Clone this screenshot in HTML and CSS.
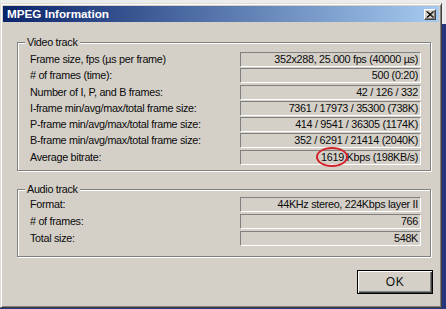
FILE: index.html
```html
<!DOCTYPE html>
<html>
<head>
<meta charset="utf-8">
<title>MPEG Information</title>
<link rel="stylesheet" href="styles.css">
</head>
<body>
<div class="window">
  <div class="titlebar">
    <span class="title">MPEG Information</span>
    <span class="close"><svg width="8" height="7" viewBox="0 0 8 7"><path d="M0.5 0.5 L7 6.5 M1.5 0.5 L8 6.5 M7 0.5 L0.5 6.5 M8 0.5 L1.5 6.5" stroke="#000" stroke-width="1" fill="none"/></svg></span>
  </div>
  <div class="body">
    <section class="group video">
      <div class="legend">Video track</div>
      <div class="rows">
        <div class="label">Frame size, fps (µs per frame)</div><div class="value">352x288, 25.000 fps (40000 µs)</div>
        <div class="label"># of frames (time):</div><div class="value">500 (0:20)</div>
        <div class="label">Number of I, P, and B frames:</div><div class="value">42 / 126 / 332</div>
        <div class="label">I-frame min/avg/max/total frame size:</div><div class="value">7361 / 17973 / 35300 (738K)</div>
        <div class="label">P-frame min/avg/max/total frame size:</div><div class="value">414 / 9541 / 36305 (1174K)</div>
        <div class="label">B-frame min/avg/max/total frame size:</div><div class="value">352 / 6291 / 21414 (2040K)</div>
        <div class="label">Average bitrate:</div><div class="value"><span class="hl">1619</span> Kbps (198KB/s)</div>
      </div>
    </section>
    <section class="group audio">
      <div class="legend">Audio track</div>
      <div class="rows">
        <div class="label">Format:</div><div class="value">44KHz stereo, 224Kbps layer II</div>
        <div class="label"># of frames:</div><div class="value">766</div>
        <div class="label">Total size:</div><div class="value">548K</div>
      </div>
    </section>
    <div class="actions"><button class="ok">OK</button></div>
  </div>
</div>
</body>
</html>
```
FILE: styles.css
```css
html, body {
  margin: 0;
  padding: 0;
}
body {
  width: 446px;
  height: 309px;
  overflow: hidden;
  background: linear-gradient(#ececec 0 24px, #24357a 24px);
  font-family: "Liberation Sans", Arial, sans-serif;
  color: #0a0a0a;
}
.window {
  box-sizing: border-box;
  width: 442px;
  height: 305px;
  margin-top: 3px;
  background: #d4d0c8;
  border: 1px solid;
  border-color: #e0ddd6 #404040 #404040 #e0ddd6;
  box-shadow: inset 1px 1px #fff, inset -1px -1px #808080;
  padding: 2px;
  display: flex;
  flex-direction: column;
}
.titlebar {
  height: 16px;
  flex: none;
  background: linear-gradient(to right, #0a246a, #a6caf0);
  display: flex;
  align-items: center;
  justify-content: space-between;
  padding: 0 3px 0 4px;
}
.title {
  color: #fff;
  font-weight: bold;
  font-size: 11.7px;
  line-height: 16px;
}
.close {
  box-sizing: border-box;
  width: 12px;
  height: 11px;
  background: #d4d0c8;
  border: 1px solid;
  border-color: #fff #404040 #404040 #fff;
  box-shadow: inset -1px -1px #808080;
  display: flex;
  align-items: center;
  justify-content: center;
}
.close svg {
  display: block;
}
.body {
  flex: 1;
  padding: 20px 0 0 14px;
}
.group {
  position: relative;
  box-sizing: border-box;
  width: 414px;
  border: 1px solid #808080;
  box-shadow: inset 1px 1px #fff, 1px 1px #fff;
}
.video {
  padding: 9px 9px 5px 12px;
}
.audio {
  margin-top: 18px;
  padding: 7px 9px 10px 12px;
}
.legend {
  position: absolute;
  top: -7px;
  left: 7px;
  padding: 0 2px;
  background: #d4d0c8;
  font-size: 10.8px;
  letter-spacing: -0.3px;
  line-height: 12px;
}
.rows {
  display: grid;
  grid-template-columns: 1fr 181px;
  row-gap: 1.3px;
}
.audio .rows {
  row-gap: 2px;
}
.label, .value {
  height: 15px;
  font-size: 10.8px;
  letter-spacing: -0.3px;
  white-space: nowrap;
}
.label {
  line-height: 15px;
}
.value {
  box-sizing: border-box;
  line-height: 13px;
  border: 1px solid;
  border-color: #808080 #fff #fff #808080;
  text-align: right;
  padding-right: 2px;
}
.hl {
  position: relative;
}
.hl::after {
  content: "";
  position: absolute;
  left: -5px;
  right: -4px;
  top: -4px;
  bottom: -4px;
  border: 2px solid #d2232a;
  border-radius: 50%;
}
.actions {
  display: flex;
  justify-content: flex-end;
  padding-right: 6px;
  margin-top: 13px;
}
.ok {
  box-sizing: border-box;
  width: 76px;
  height: 24px;
  margin: 0;
  padding: 0;
  background: #d4d0c8;
  border: 1px solid #000;
  box-shadow: inset 1px 1px #fff, inset -1px -1px #404040, inset -2px -2px #808080;
  font-family: "Liberation Sans", Arial, sans-serif;
  font-size: 12px;
  letter-spacing: 0.5px;
  color: #111;
}
```
